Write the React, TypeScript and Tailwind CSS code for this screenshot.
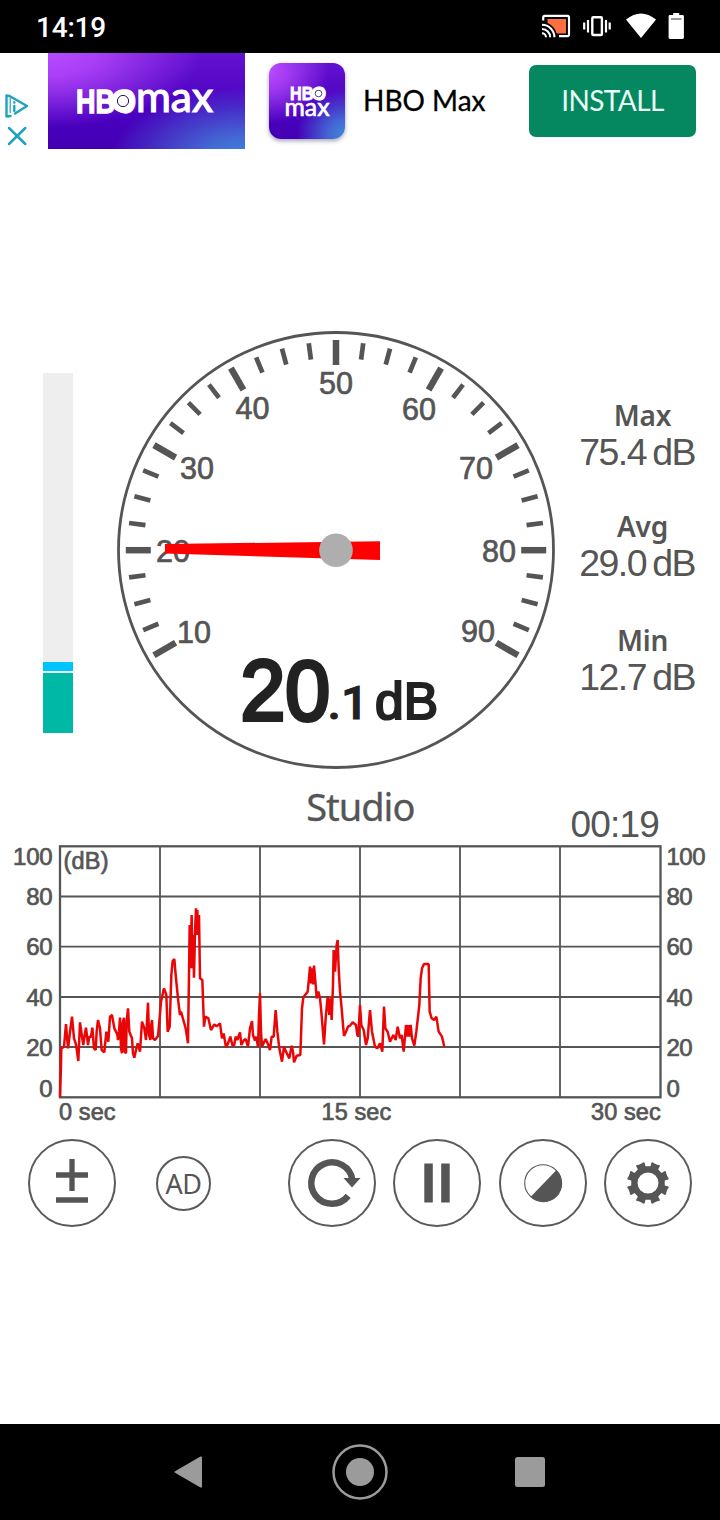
import React from 'react';

const INK = '#555555';
const SANS = '"Liberation Sans", Arial, sans-serif';

function StatusIcons() {
  return (
    <svg width="160" height="34" viewBox="536 10 160 34" className="shrink-0">
      <rect x="547.5" y="19" width="18.5" height="14.5" fill="#ff6e40" />
      <path d="M542 37V22a15 15 0 0 1 15 15z" fill="#000" />
      <path d="M543.2 20.5v-3a1.6 1.6 0 0 1 1.6-1.6h22.6a1.6 1.6 0 0 1 1.6 1.6v17a1.6 1.6 0 0 1-1.6 1.6H559" fill="none" stroke="#fff" strokeWidth="2.2" />
      <path d="M542 33.2a4 4 0 0 1 4 4M542 29a8.2 8.2 0 0 1 8.2 8.2M542 24.8a12.4 12.4 0 0 1 12.4 12.4" fill="none" stroke="#fff" strokeWidth="2.1" />
      <rect x="592.3" y="17.2" width="9.6" height="17.8" rx="1" fill="none" stroke="#fff" strokeWidth="2.4" />
      <path d="M584.2 22.5v7M588 20v12.5M606 20v12.5M609.7 22.5v7" stroke="#fff" strokeWidth="2.2" />
      <path d="M626 19.5Q641 7.5 656 19.5L641 38z" fill="#fff" />
      <path d="M670 15h3.200v-2h6v2h3.300a1.400 1.400 0 0 1 1.400 1.400v21.200a1.400 1.400 0 0 1-1.400 1.400H670a1.400 1.400 0 0 1-1.400-1.400V16.400a1.400 1.400 0 0 1 1.400-1.400z" fill="#fff" />
      <path d="M671 19h10.500" stroke="#555" strokeWidth="1.2" />
    </svg>
  );
}

function AdBar() {
  return (
    <div className="flex h-24 items-start bg-white">
      <svg width="48" height="96" viewBox="0 53 48 96" className="shrink-0" fill="none" stroke="#1fa3bd" strokeLinecap="round" strokeLinejoin="round">
        <path d="M10.500 116L6.500 116.500V95.500L9.500 96L27 106L15 113.500" strokeWidth="2.400" />
        <path d="M10.200 98.500v14" strokeWidth="1.200" />
        <path d="M14.300 106v5M14.300 102.300v.2" strokeWidth="2.400" />
        <path d="M9 128l16.300 16M25.300 128L9 144" strokeWidth="2.500" />
      </svg>
      <div className="h-24 w-[197px] shrink-0 bg-[radial-gradient(ellipse_at_0%_0%,#b84bff_0%,#a83ef5_18%,transparent_55%),radial-gradient(ellipse_at_100%_110%,#3f86dc_0%,#4368d4_15%,transparent_48%),linear-gradient(180deg,#6312cf_0%,#4a00c0_60%,#4400b4_100%)]">
        <svg width="197" height="96" viewBox="48 53 197 96">
          <g fill="#fff" stroke="#fff" fontFamily={SANS}>
            <text x="76" y="112.500" fontSize="32.500" fontWeight="700" strokeWidth="1.300" textLength="60" lengthAdjust="spacingAndGlyphs">HBO</text>
            <text x="136" y="112.300" fontSize="43" strokeWidth="1.200" fontFamily="Lato, sans-serif" textLength="77" lengthAdjust="spacingAndGlyphs">max</text>
          </g>
          <circle cx="123" cy="101" r="11.800" fill="#fff" />
          <circle cx="123" cy="101" r="5.600" fill="#fff" stroke="#2c1060" strokeWidth="1" />
        </svg>
      </div>
      <div className="ml-6 mt-[10px] h-[76px] w-[76px] shrink-0 rounded-[12px] shadow-[0_2px_4px_rgba(60,50,90,0.45)] bg-[radial-gradient(ellipse_at_0%_10%,#b84bff_0%,#a23af2_18%,transparent_55%),radial-gradient(ellipse_at_100%_95%,#3f86dc_0%,#4368d4_15%,transparent_45%),linear-gradient(180deg,#6312cf_0%,#4a00c0_60%,#4400b4_100%)]">
        <svg width="76" height="76" viewBox="269 63 76 76">
          <g fill="#fff" stroke="#fff">
            <text x="290" y="100" fontSize="19" fontWeight="700" strokeWidth=".8" fontFamily={SANS} textLength="36" lengthAdjust="spacingAndGlyphs">HBO</text>
            <text x="284.500" y="115.600" fontSize="25" strokeWidth=".7" fontFamily="Lato, sans-serif" textLength="45" lengthAdjust="spacingAndGlyphs">max</text>
          </g>
          <circle cx="318.500" cy="93.500" r="7" fill="#fff" />
          <circle cx="318.500" cy="93.500" r="3.300" fill="#fff" stroke="#2c1060" strokeWidth=".8" />
        </svg>
      </div>
      <div className="ml-[18px] mt-[29px] w-[166px] whitespace-nowrap font-[Lato,sans-serif] text-[28px] leading-9 text-black [-webkit-text-stroke:0.3px_black]">HBO Max</div>
      <button className="mt-3 h-[72px] w-[167px] shrink-0 rounded-[7px] bg-[#05875f] pb-[2px] font-[Lato,sans-serif] text-[28px] leading-9 tracking-[-0.6px] text-[#e8fff6]">INSTALL</button>
    </div>
  );
}

const gaugeLabels: [string, number, number][] = [
  ['10', 194, 643], ['20', 173, 562], ['30', 197, 478.5], ['40', 252.500, 419], ['50', 336, 394],
  ['60', 419, 419.500], ['70', 476, 479], ['80', 499, 562], ['90', 478, 641.500],
];

function Gauge() {
  const ticks = Array.from({ length: 33 }, (_, i) => ({ angle: -120 + i * 7.5, major: i % 4 === 0 }));
  return (
    <svg width="438" height="440" viewBox="117 330 438 440" className="shrink-0" fontFamily={SANS}>
      <circle cx="336" cy="550" r="217.500" fill="#fff" stroke={INK} strokeWidth="2.800" />
      {ticks.map((t) => (
        <line key={t.angle} x1="336" x2="336" y1={t.major ? 340 : 341.500} y2={t.major ? 365 : 358} stroke={INK} strokeWidth={t.major ? 6.500 : 4.700} transform={`rotate(${t.angle} 336 550.2)`} />
      ))}
      <g fill={INK} stroke={INK} strokeWidth=".7" fontSize="31.500" textAnchor="middle">
        {gaugeLabels.map(([s, x, y]) => <text key={s} x={x} y={y} textLength="34" lengthAdjust="spacingAndGlyphs">{s}</text>)}
      </g>
      <path d="M165 544L380 541.300V560L165 553.500z" fill="#f00" />
      <circle cx="336" cy="550.300" r="16.800" fill="#aeaeae" />
      <g fill="#222" stroke="#222">
        <text x="240.500" y="719.500" fontSize="85.500" strokeWidth="4" textLength="89.500" lengthAdjust="spacingAndGlyphs">20</text>
        <text x="327.500" y="719" fontSize="47" strokeWidth="1" fontFamily="Roboto, sans-serif" fontWeight="500" textLength="41" lengthAdjust="spacingAndGlyphs">.1</text>
        <text x="375" y="719" fontSize="52" strokeWidth="2.200" textLength="63" lengthAdjust="spacingAndGlyphs">dB</text>
      </g>
    </svg>
  );
}

function Stat({ name, value }: { name: string; value: string }) {
  return (
    <div className="flex flex-col items-end text-[#555]">
      <div className="w-[107px] text-center font-['Noto_Sans',sans-serif] text-[28px] font-semibold leading-9 tracking-[-0.2px]">{name}</div>
      <div className="mt-px flex h-9 items-center gap-[6px] whitespace-nowrap pr-px font-['Liberation_Sans',Arial,sans-serif] text-[37.500px] leading-9"><span className="tracking-[-1.500px]">{value}</span><span className="tracking-[-1.500px]">dB</span></div>
    </div>
  );
}

const trace =
  '180,787 183,690 184,640 192,635 198,567 204,640 209,600 216,545 222,610 228,628 235,678 240,562 246,605 250,630 254,600 258,578 264,630 268,605 273,606 277,578 282,640 287,645 290,590 294,555 300,580 305,645 313,652 319,590 325,620 330,545 336,540 343,580 352,598 354,615 357,590 360,548 363,640 366,655 368,565 372,548 374,650 378,655 380,560 384,520 388,590 396,610 399,655 403,668 408,645 413,625 420,650 426,560 433,580 438,615 444,503 447,600 451,615 453,575 456,555 459,610 465,615 474,603 478,560 483,500 492,460 499,480 503,590 509,575 514,420 518,378 523,372 527,420 535,500 540,540 543,530 550,555 557,580 564,625 567,420 569,270 571,400 575,240 577,400 580,300 582,428 585,290 588,220 590,300 592,225 594,300 597,240 600,430 607,435 612,575 616,545 625,550 633,585 643,568 650,574 ' +
  '660,565 666,610 671,595 678,637 684,625 691,605 697,630 702,632 707,605 712,615 720,592 724,630 732,615 737,612 744,635 750,580 756,558 759,600 765,617 769,605 774,637 777,540 780,475 783,590 786,635 792,622 797,612 805,630 810,645 815,605 821,605 827,525 832,590 838,640 846,680 852,635 858,650 868,670 875,632 879,650 882,682 890,662 901,660 906,520 910,487 923,470 927,430 930,395 933,445 936,400 939,448 942,392 947,450 950,490 955,470 960,490 964,530 972,628 977,550 983,485 988,540 991,490 995,555 999,450 1001,345 1005,410 1010,330 1013,315 1016,400 1020,470 1024,510 1032,603 1038,590 1044,575 1050,572 1058,562 1068,570 1072,600 1075,605 1080,510 1084,570 1091,585 1098,630 1103,610 1110,525 1116,590 1125,635 1132,640 1140,625 1147,650 1152,515 1156,580 1163,590 1170,620 1180,600 1187,615 1193,575 1200,610 1205,600 1211,650 1218,570 1222,605 1225,570 1228,605 1232,570 1236,610 1243,632 1249,590 1258,510 1262,430 1266,400 1272,387 1286,387 1289,530 1295,550 1302,555 1309,545 1316,590 1326,605 1333,635';

function Chart() {
  const levels: [string, number][] = [['100', 864.500], ['80', 905], ['60', 955], ['40', 1005.500], ['20', 1055.500], ['0', 1096.500]];
  return (
    <svg width="720" height="286" viewBox="0 843 720 286" fontFamily={SANS} className="block">
      <g fill="none" stroke={INK} strokeWidth="1.800">
        <path d="M60 896.500H660M60 946.700H660M60 997H660M60 1047H660" />
        <path d="M160 846V1097M260 846V1097M360 846V1097M460 846V1097M560 846V1097" />
        <rect x="60" y="846.300" width="600.500" height="251" strokeWidth="2.300" />
      </g>
      <g fill={INK} stroke={INK} strokeWidth=".7" fontSize="24">
        {levels.map(([s, y]) => (
          <React.Fragment key={s}>
            <text x="52.500" y={y} textAnchor="end" letterSpacing="-.2">{s}</text>
            <text x="666.500" y={y} letterSpacing="-.5">{s}</text>
          </React.Fragment>
        ))}
        <text x="63.500" y="869" fontSize="23.500" letterSpacing=".2">(dB)</text>
        <text x="59" y="1119.500" fontSize="23.500" letterSpacing=".1">0 sec</text>
        <text x="321.500" y="1119.500" fontSize="23.500" letterSpacing=".1">15 sec</text>
        <text x="591" y="1119.500" fontSize="23.500" letterSpacing=".1">30 sec</text>
      </g>
      <polyline points={trace} transform="translate(0 835) scale(0.33333)" fill="none" stroke="#ea0606" strokeWidth="7.500" strokeLinejoin="bevel" />
    </svg>
  );
}

function RoundButton({ children }: { children: React.ReactNode }) {
  return (
    <button className="flex h-[88px] w-[88px] shrink-0 items-center justify-center rounded-full border-2 border-[#5a5a5a] bg-white">
      <svg width="60" height="60" viewBox="-30 -30 60 60">{children}</svg>
    </button>
  );
}

function gearPath() {
  const pts: string[] = [];
  for (let i = 0; i < 8; i++) {
    const mid = 22.5 + i * 45;
    const corners: [number, number][] = [[-14, 17], [-13, 20.500], [-10, 21.300], [-4, 20.500], [4, 20.500], [10, 21.300], [13, 20.500], [14, 17], [22.5, 16.700]];
    corners.forEach(([d, r]) => {
      const a = ((mid + d) * Math.PI) / 180;
      pts.push(`${(Math.cos(a) * r).toFixed(2)} ${(Math.sin(a) * r).toFixed(2)}`);
    });
  }
  return `M${pts.join('L')}ZM10.500 0A10.500 10.500 0 1 0 -10.500 0A10.500 10.500 0 1 0 10.500 0Z`;
}

function Controls() {
  return (
    <div className="flex h-[88px] items-center pl-7">
      <RoundButton><path d="M-16 -8H16M0 -24V8M-16 17H16" stroke={INK} strokeWidth="5.300" /></RoundButton>
      <button className="ml-10 flex h-[55px] w-[55px] shrink-0 items-center justify-center rounded-full border-2 border-[#5a5a5a] font-['Noto_Sans',sans-serif] text-[27px] leading-none tracking-[-0.5px] text-[#555]">AD</button>
      <div className="ml-[77px] flex gap-[17.300px]">
        <RoundButton>
          <path d="M20.500 -3A20.700 20.700 0 1 0 16.200 12.900" fill="none" stroke={INK} strokeWidth="6.500" />
          <path d="M11.500 -5H28.500L20 4.500z" fill={INK} />
        </RoundButton>
        <RoundButton><path d="M-12.700 -19.500h8.500v39h-8.500zM4.200 -19.500h8.500v39H4.200z" fill={INK} /></RoundButton>
        <RoundButton>
          <circle r="18.300" fill="#fff" stroke={INK} strokeWidth="1.100" />
          <path d="M13.500 -13A18.700 18.700 0 1 1 -12.500 13.900z" fill={INK} />
        </RoundButton>
        <RoundButton><path d={gearPath()} fill={INK} fillRule="evenodd" /></RoundButton>
      </div>
    </div>
  );
}

export default function App() {
  return (
    <div className="flex h-[1520px] w-[720px] flex-col overflow-hidden bg-white">
      <header className="flex h-[53px] shrink-0 items-center justify-between bg-black pl-9 pr-6 text-white">
        <span className="pt-[2px] font-[Roboto,sans-serif] text-[28px] font-medium leading-none tracking-[-0.2px]">14:19</span>
        <StatusIcons />
      </header>
      <AdBar />
      <main className="flex flex-1 flex-col pt-[181px]">
        <section className="flex h-[440px] shrink-0">
          <div className="ml-[43px] mr-11 mt-[43px] flex h-[360px] w-[30px] shrink-0 flex-col bg-[#eeeeee]">
            <div className="mt-auto h-[9px] bg-[#00c4ff]" />
            <div className="h-[2px] bg-[#e8fbff]" />
            <div className="h-[60px] bg-[#00b8a6]" />
          </div>
          <Gauge />
          <div className="flex w-[141px] shrink-0 flex-col pt-[67px]">
            <Stat name="Max" value="75.4" />
            <div className="h-[38px]" />
            <Stat name="Avg" value="29.0" />
            <div className="h-[41px]" />
            <Stat name="Min" value="12.7" />
          </div>
        </section>
        <section className="flex h-[73px] shrink-0 items-start justify-end pr-[61px] text-[#555]">
          <div className="mr-[156px] mt-[14px] font-['Noto_Sans',sans-serif] text-[38px] leading-[44px] tracking-[-1px] [-webkit-text-stroke:0.3px_#555]">Studio</div>
          <div className="mt-[33px] font-['Liberation_Sans',Arial,sans-serif] text-[37px] leading-[44px] tracking-[-0.8px]">00:19</div>
        </section>
        <Chart />
        <div className="mt-[10px]"><Controls /></div>
      </main>
      <footer className="flex h-24 shrink-0 bg-black">
        <svg width="720" height="96" viewBox="0 1424 720 96" fill="#9b9b9b">
          <path d="M175 1471.200L200.500 1456.500Q202 1456 202 1457.500V1486.500Q202 1488 200.500 1487.500L175 1472.800Q173.500 1472 175 1471.200z" />
          <circle cx="360" cy="1472" r="26.500" fill="none" stroke="#9b9b9b" strokeWidth="2.500" />
          <circle cx="360" cy="1472" r="14" />
          <rect x="515" y="1457" width="30" height="30" rx="2.500" />
        </svg>
      </footer>
    </div>
  );
}
